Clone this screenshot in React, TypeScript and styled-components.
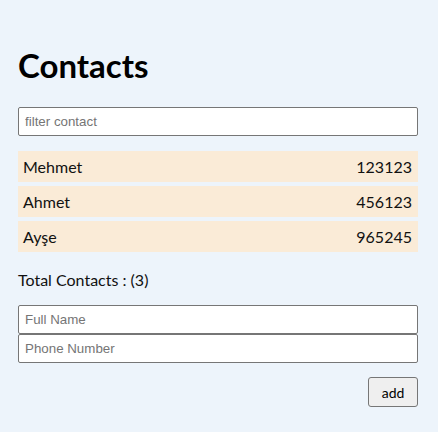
import React, { useState } from "react";
import styled, { createGlobalStyle } from "styled-components";

const Global = createGlobalStyle`
  html, body {
    margin: 0;
    padding: 0;
    background: #edf4fb;
  }
  body {
    font-family: Lato, "Open Sans", sans-serif;
    color: #000;
  }
`;

const Page = styled.div`
  min-height: 432px;
  box-sizing: border-box;
  padding: 45px 20px 0 18px;
  background: #edf4fb;
`;

const Panel = styled.div`
  width: 400px;
  display: flex;
  flex-direction: column;
`;

const Title = styled.h1`
  margin: 0 0 22px;
  font-family: Lato, sans-serif;
  font-weight: 700;
  font-size: 33px;
  line-height: 40px;
`;

const TextInput = styled.input`
  box-sizing: border-box;
  width: 100%;
  height: 29px;
  margin: 0;
  padding: 0 6px;
  border: 1px solid #767676;
  border-radius: 2px;
  background: #fff;
  font-family: "Liberation Sans", Arial, sans-serif;
  font-size: 13.33px;
  color: #000;
  outline: none;
  &::placeholder {
    color: #757575;
  }
`;

const List = styled.ul`
  list-style: none;
  margin: 15px 0 0;
  padding: 0;
  display: flex;
  flex-direction: column;
  gap: 4px;
`;

const Row = styled.li`
  display: flex;
  justify-content: space-between;
  align-items: center;
  height: 31px;
  padding: 0 6px 0 5px;
  background: #faebd7;
  font-size: 16px;
  line-height: 31px;
  color: #111;
`;

const Total = styled.p`
  margin: 18px 0 15px;
  font-size: 16px;
  line-height: 20px;
  color: #111;
`;

const Form = styled.form`
  display: flex;
  flex-direction: column;
`;

const Actions = styled.div`
  display: flex;
  justify-content: flex-end;
  margin-top: 14px;
`;

const Button = styled.button`
  width: 50px;
  height: 30px;
  margin: 0;
  padding: 0;
  border: 1px solid #767676;
  border-radius: 3px;
  background: #efefef;
  font-family: Lato, sans-serif;
  font-size: 14px;
  color: #000;
`;

const initial = [
  { name: "Mehmet", phone: "123123" },
  { name: "Ahmet", phone: "456123" },
  { name: "Ayşe", phone: "965245" },
];

export default function App() {
  const [contacts, setContacts] = useState(initial);
  const [filter, setFilter] = useState("");
  const [name, setName] = useState("");
  const [phone, setPhone] = useState("");

  const shown = contacts.filter((c) =>
    (c.name + c.phone).toLowerCase().includes(filter.toLowerCase())
  );

  return (
    <Page>
      <Global />
      <Panel>
        <Title>Contacts</Title>
        <TextInput
          placeholder="filter contact"
          value={filter}
          onChange={(e) => setFilter(e.target.value)}
        />
        <List>
          {shown.map((c) => (
            <Row key={c.name}>
              <span>{c.name}</span>
              <span>{c.phone}</span>
            </Row>
          ))}
        </List>
        <Total>Total Contacts : ({shown.length})</Total>
        <Form
          onSubmit={(e) => {
            e.preventDefault();
            if (!name || !phone) return;
            setContacts([...contacts, { name, phone }]);
            setName("");
            setPhone("");
          }}
        >
          <TextInput
            placeholder="Full Name"
            value={name}
            onChange={(e) => setName(e.target.value)}
          />
          <TextInput
            placeholder="Phone Number"
            value={phone}
            onChange={(e) => setPhone(e.target.value)}
          />
          <Actions>
            <Button type="submit">add</Button>
          </Actions>
        </Form>
      </Panel>
    </Page>
  );
}
